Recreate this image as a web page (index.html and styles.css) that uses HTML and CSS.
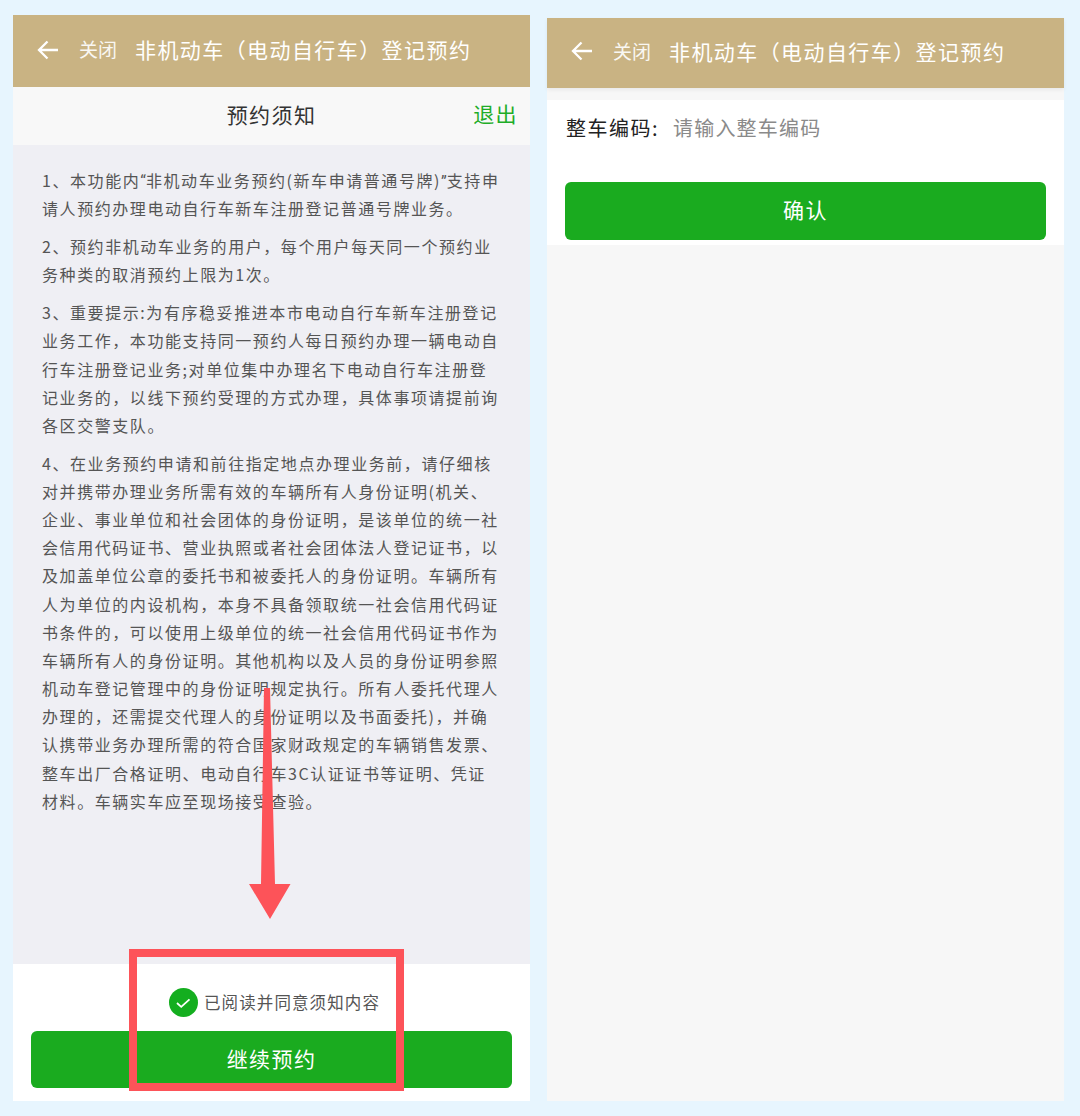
FILE: index.html
```html
<!DOCTYPE html>
<html lang="zh-CN">
<head>
<meta charset="utf-8">
<title>非机动车（电动自行车）登记预约</title>
<link rel="stylesheet" href="styles.css">
</head>
<body>
<main class="canvas">
  <section class="phone phone-left">
    <header class="appbar">
      <svg class="back" viewBox="0 0 22 20" width="22" height="20" aria-hidden="true"><path d="M21 10H2.500M10.500 1.500 2 10l8.500 8.500" fill="none" stroke="#fff" stroke-width="2.300"/></svg>
      <span class="close">关闭</span>
      <span class="apptitle">非机动车（电动自行车）登记预约</span>
    </header>
    <div class="subbar">
      <h1 class="subtitle">预约须知</h1>
      <span class="exit">退出</span>
    </div>
    <article class="notice">
      <p>1、本功能内<span class="latin">“</span>非机动车业务预约(新车申请普通号牌)<span class="latin">”</span>支持申<br>请人预约办理电动自行车新车注册登记普通号牌业务。</p>
      <p>2、预约非机动车业务的用户，每个用户每天同一个预约业<br>务种类的取消预约上限为1次。</p>
      <p>3、重要提示:为有序稳妥推进本市电动自行车新车注册登记<br>业务工作，本功能支持同一预约人每日预约办理一辆电动自<br>行车注册登记业务;对单位集中办理名下电动自行车注册登<br>记业务的，以线下预约受理的方式办理，具体事项请提前询<br>各区交警支队。</p>
      <p>4、在业务预约申请和前往指定地点办理业务前，请仔细核<br>对并携带办理业务所需有效的车辆所有人身份证明(机关、<br>企业、事业单位和社会团体的身份证明，是该单位的统一社<br>会信用代码证书、营业执照或者社会团体法人登记证书，以<br>及加盖单位公章的委托书和被委托人的身份证明。车辆所有<br>人为单位的内设机构，本身不具备领取统一社会信用代码证<br>书条件的，可以使用上级单位的统一社会信用代码证书作为<br>车辆所有人的身份证明。其他机构以及人员的身份证明参照<br>机动车登记管理中的身份证明规定执行。所有人委托代理人<br>办理的，还需提交代理人的身份证明以及书面委托)，并确<br>认携带业务办理所需的符合国家财政规定的车辆销售发票、<br>整车出厂合格证明、电动自行车3C认证证书等证明、凭证<br>材料。车辆实车应至现场接受查验。</p>
    </article>
    <footer class="agree">
      <div class="agree-row">
        <svg class="tick" viewBox="0 0 29 29" width="29" height="29" aria-hidden="true"><circle cx="14.500" cy="14.500" r="14.500" fill="#14ae1f"/><path d="M8 15l4.200 3.800 8.300-7.500" fill="none" stroke="#fff" stroke-width="1.800"/></svg>
        <span class="agree-text">已阅读并同意须知内容</span>
      </div>
      <button class="btn btn-left" type="button"><span class="btn-label">继续预约</span></button>
    </footer>
    <svg class="arrow" viewBox="0 0 44 234" width="44" height="234" aria-hidden="true"><path d="M16 0h6l5 196h15.500L22 231 1 196h12z" fill="#fd5359"/></svg>
    <div class="highlight"></div>
  </section>

  <section class="phone phone-right">
    <header class="appbar appbar-right">
      <svg class="back" viewBox="0 0 22 20" width="22" height="20" aria-hidden="true"><path d="M21 10H2.500M10.500 1.500 2 10l8.500 8.500" fill="none" stroke="#fff" stroke-width="2.300"/></svg>
      <span class="close">关闭</span>
      <span class="apptitle">非机动车（电动自行车）登记预约</span>
    </header>
    <form class="form">
      <div class="field">
        <span class="field-label">整车编码:</span>
        <span class="field-hint">请输入整车编码</span>
      </div>
      <button class="btn btn-right" type="button"><span class="btn-label">确认</span></button>
    </form>
  </section>
</main>
</body>
</html>
```

FILE: styles.css
```css
* { box-sizing: border-box; }
html, body { margin: 0; padding: 0; }
body {
  width: 1080px;
  height: 1116px;
  overflow: hidden;
  background: #e7f5fe;
  font-family: "Noto Sans CJK SC", "Noto Sans", sans-serif;
}
.canvas { display: flex; padding-left: 13px; gap: 17px; }
.phone { position: relative; width: 517px; display: flex; flex-direction: column; }
.phone-left { margin-top: 15px; height: 1086px; }
.phone-right { margin-top: 18px; height: 1083px; background: #f7f7f7; }

.appbar {
  height: 72px;
  flex: none;
  background: #c9b383;
  color: #fff;
  display: flex;
  align-items: center;
  padding-left: 24px;
  padding-bottom: 4px;
}
.appbar-right { height: 70px; padding-bottom: 5px; box-shadow: 0 2px 4px rgba(0,0,0,.06); }
.back { flex: none; margin-right: 20px; margin-top: 1px; }
.close { font-size: 19px; line-height: 24px; width: 56px; flex: none; opacity: .9; }
.apptitle { font-size: 21px; letter-spacing: 1.420px; line-height: 28px; white-space: nowrap; }

.subbar {
  height: 58px;
  flex: none;
  background: #f8f8f8;
  display: flex;
  align-items: center;
  justify-content: center;
  position: relative;
  padding-bottom: 4px;
}
.subtitle { margin: 0; font-size: 21px; font-weight: 400; letter-spacing: 1.420px; color: #333; line-height: 28px; }
.exit { position: absolute; right: 12px; top: 12px; font-size: 21px; letter-spacing: 1.420px; color: #1ead28; line-height: 28px; }

.notice { flex: 1; background: #efeff4; padding: 21px 0 0 29px; color: #555; font-size: 16px; letter-spacing: 1.570px; line-height: 28.150px; white-space: nowrap; }
.notice p { margin: 0 0 9.800px; }
.latin { font-family: "Roboto", sans-serif; letter-spacing: 0; line-height: 1; }

.agree { height: 137px; flex: none; background: #fff; padding-top: 24px; display: flex; flex-direction: column; align-items: center; }
.agree-row { height: 29px; display: flex; align-items: center; gap: 6px; margin-bottom: 14px; padding-left: 6px; }
.agree-text { font-size: 16.500px; letter-spacing: 1.100px; color: #555; line-height: 24px; margin-top: -2px; }

.btn { display: block; border: 0; background: #1aab1f; color: #fff; border-radius: 6px; font: inherit; font-size: 21px; letter-spacing: 1.420px; padding: 0; }
.btn-label { position: relative; top: -2px; }
.btn-left { width: 481px; height: 57px; }

.form { background: #fff; margin-top: 12px; height: 145px; padding: 0 18px; }
.field { height: 82px; padding-top: 14px; display: flex; font-size: 20px; line-height: 28px; letter-spacing: 1.500px; padding-left: 1px; }
.field-label { color: #222; width: 107px; flex: none; }
.field-hint { color: #8a8a8a; letter-spacing: 1.200px; }
.btn-right { width: 481px; height: 58px; }

.arrow { position: absolute; left: 235px; top: 673px; }
.highlight { position: absolute; left: 116px; top: 934px; width: 275px; height: 142px; border: 8px solid #fd5359; }
```
